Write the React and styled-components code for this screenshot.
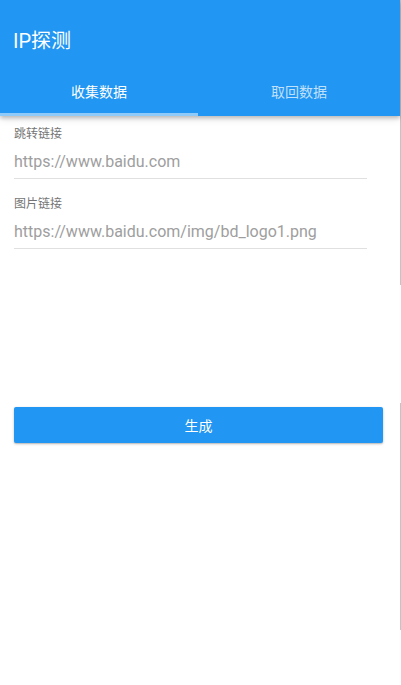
import React, { useState } from 'react';
import styled, { createGlobalStyle } from 'styled-components';

const GlobalStyle = createGlobalStyle`
  html, body {
    margin: 0;
    padding: 0;
    background: #fff;
  }
  body {
    font-family: Roboto, "Noto Sans CJK SC", sans-serif;
  }
`;

const Page = styled.div`
  display: flex;
  width: 401px;
  height: 685px;
  overflow: hidden;
`;

const Main = styled.div`
  width: 400px;
  display: flex;
  flex-direction: column;
`;

const Edge = styled.div`
  width: 1px;
  display: flex;
  flex-direction: column;
`;

const EdgeSegment = styled.div`
  height: ${p => p.h}px;
  background: ${p => (p.on ? '#c4c4c4' : 'transparent')};
`;

const Header = styled.div`
  background: #2196f3;
  color: #fff;
  box-shadow: 0 2px 4px rgba(0, 0, 0, 0.22), 0 3px 8px rgba(0, 0, 0, 0.1);
  position: relative;
  z-index: 1;
`;

const Toolbar = styled.div`
  height: 82px;
  display: flex;
  align-items: center;
  padding-left: 13px;
  font-size: 20px;
  line-height: 24px;
`;

const TabBar = styled.div`
  display: grid;
  grid-template-columns: 198px 1fr;
  height: 34px;
`;

const Tab = styled.div`
  display: flex;
  flex-direction: column;
  align-items: center;
  font-size: 14px;
  line-height: 21px;
  color: ${p => (p.active ? '#fff' : 'rgba(255, 255, 255, 0.72)')};
  cursor: pointer;
`;

const Indicator = styled.div`
  margin-top: auto;
  align-self: stretch;
  height: 3px;
  background: ${p => (p.active ? '#90caf9' : 'transparent')};
`;

const Content = styled.div`
  padding: 10px 17px 0 14px;
  display: flex;
  flex-direction: column;
`;

const Field = styled.div`
  display: flex;
  flex-direction: column;
  margin-right: 16px;
  & + & {
    margin-top: 17px;
  }
`;

const Label = styled.label`
  font-size: 12px;
  line-height: 16px;
  color: #757575;
`;

const Input = styled.input`
  border: none;
  border-bottom: 1px solid #e0e0e0;
  padding: 10px 0 6px;
  font-family: Roboto, "Noto Sans CJK SC", sans-serif;
  font-size: 16px;
  line-height: 20px;
  height: 20px;
  color: #9e9e9e;
  outline: none;
  background: transparent;
  &::placeholder {
    color: #9e9e9e;
  }
`;

const Button = styled.button`
  margin-top: 158px;
  height: 36px;
  border: none;
  border-radius: 2px;
  background: #2196f3;
  color: #fff;
  font-family: Roboto, "Noto Sans CJK SC", sans-serif;
  font-size: 14px;
  box-shadow: 0 1px 3px rgba(0, 0, 0, 0.2), 0 1px 1px rgba(0, 0, 0, 0.12);
  cursor: pointer;
`;

const tabs = ['收集数据', '取回数据'];

export default function App() {
  const [active, setActive] = useState(0);

  return (
    <Page>
      <GlobalStyle />
      <Main>
        <Header>
          <Toolbar>IP探测</Toolbar>
          <TabBar>
            {tabs.map((t, i) => (
              <Tab key={i} active={i === active} onClick={() => setActive(i)}>
                {t}
                <Indicator active={i === active} />
              </Tab>
            ))}
          </TabBar>
        </Header>
        <Content>
          <Field>
            <Label>跳转链接</Label>
            <Input placeholder="https://www.baidu.com" />
          </Field>
          <Field>
            <Label>图片链接</Label>
            <Input placeholder="https://www.baidu.com/img/bd_logo1.png" />
          </Field>
          <Button>生成</Button>
        </Content>
      </Main>
      <Edge>
        <EdgeSegment h={285} on />
        <EdgeSegment h={118} />
        <EdgeSegment h={227} on />
      </Edge>
    </Page>
  );
}
